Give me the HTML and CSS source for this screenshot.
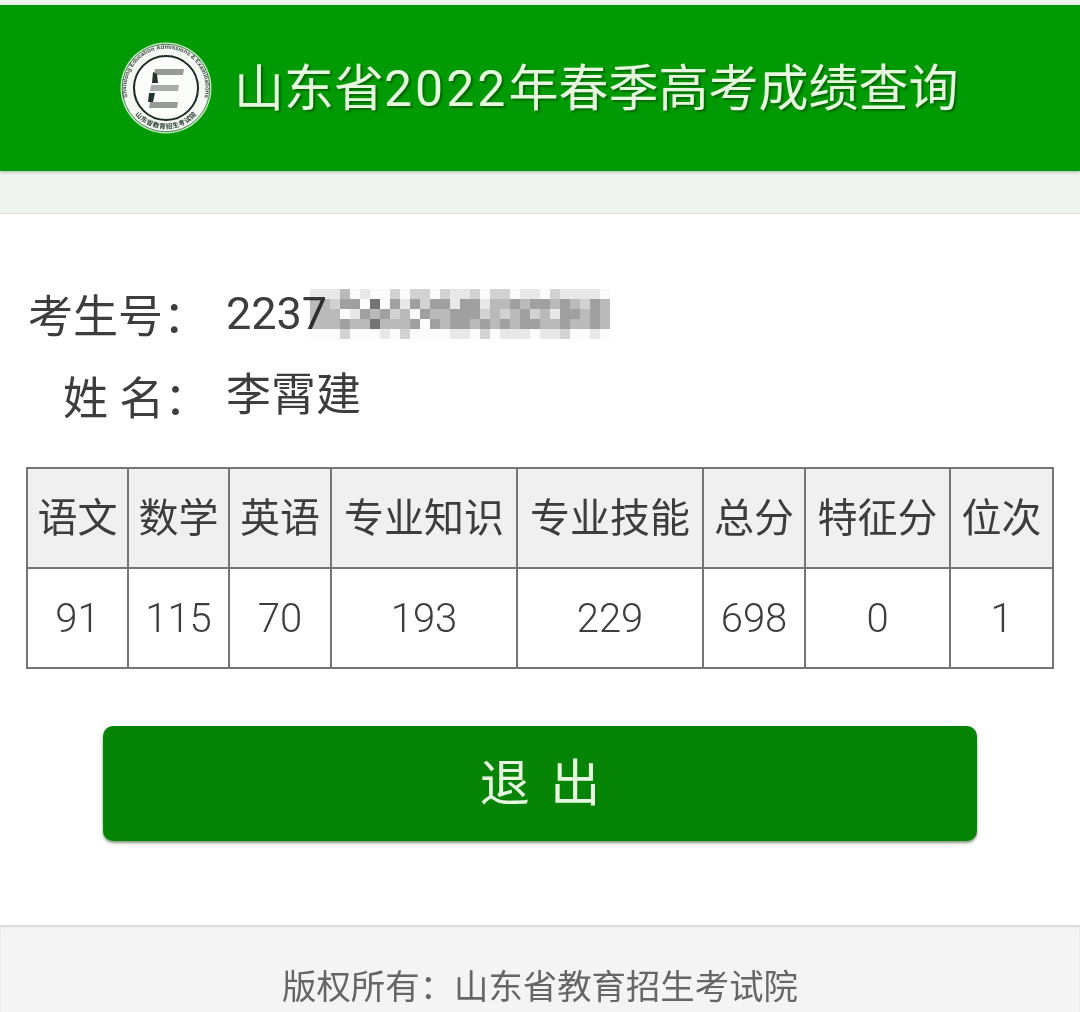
FILE: index.html
```html
<!DOCTYPE html>
<html lang="zh-CN">
<head>
    <meta charset="UTF-8">
    <meta name="viewport" content="width=device-width, initial-scale=1.0">
    <title>山东省2022年春季高考成绩查询</title>
    <link rel="stylesheet" href="styles.css">
</head>
<body>
    <header class="top-bar">
        <svg class="logo" viewBox="0 0 92 92" aria-hidden="true">
            <defs>
                <path id="ringTop" d="M11.8 66 A39.5 39.5 0 1 1 80.2 66"/>
                <path id="ringBottom" d="M9 62 A40 40 0 0 0 83 62"/>
            </defs>
            <circle cx="46" cy="46" r="45.5" fill="#c4eebd"/>
            <circle cx="46" cy="46" r="43.8" fill="#f4f8f4" stroke="#4d7d55" stroke-width="1"/>
            <text class="logo-ring"><textPath href="#ringTop" startOffset="50%" text-anchor="middle">Shandong Education Admissions &amp; Examinations</textPath></text>
            <text class="logo-ring-cn"><textPath href="#ringBottom" startOffset="50%" text-anchor="middle">山东省教育招生考试院</textPath></text>
            <circle cx="46" cy="46" r="32" fill="#fbfdfb" stroke="#1c2a20" stroke-width="2"/>
            <path class="logo-bar" d="M35 27 H64 L63 33 H34 Z M30 60 H58 L57 66 H29 Z"/>
            <path class="logo-bar-mid" d="M31 43 H59 L58 49 H30 Z"/>
            <path class="logo-dark" d="M33 30 L37 32 L38 41 L32 41 Z M29 51 L35 51 L33 60 L28 60 Z"/>
        </svg>
        <h1 class="site-title">山东省<span class="title-year">2022</span>年春季高考成绩查询</h1>
    </header>
    <div class="sub-bar"></div>

    <main class="content">
        <div class="info-row">
            <span class="info-label">考生号：</span>
            <span class="info-value">2237</span>
            <div class="mosaic" aria-hidden="true">
                <i class="a"></i><i class="a"></i><i class="a"></i><i class="c"></i><i></i><i class="a"></i><i></i><i></i><i class="b"></i><i></i><i class="b"></i><i class="b"></i><i></i><i class="b"></i><i class="a"></i><i class="a"></i><i class="b"></i><i></i><i class="b"></i><i class="b"></i><i></i><i class="a"></i><i class="a"></i><i></i><i class="b"></i><i class="a"></i><i class="a"></i><i class="a"></i><i class="a"></i><i></i>
                <i class="c"></i><i class="c"></i><i class="b"></i><i class="d"></i><i class="d"></i><i></i><i class="e"></i><i></i><i class="d"></i><i class="a"></i><i class="d"></i><i class="b"></i><i class="d"></i><i class="d"></i><i class="a"></i><i class="d"></i><i class="d"></i><i class="a"></i><i class="c"></i><i class="c"></i><i class="d"></i><i class="c"></i><i class="d"></i><i class="d"></i><i class="c"></i><i class="d"></i><i class="c"></i><i class="b"></i><i class="d"></i><i class="c"></i>
                <i class="c"></i><i class="c"></i><i class="c"></i><i></i><i class="a"></i><i class="d"></i><i class="c"></i><i class="d"></i><i class="b"></i><i class="c"></i><i></i><i class="d"></i><i class="c"></i><i class="c"></i><i class="d"></i><i class="d"></i><i class="d"></i><i class="b"></i><i class="c"></i><i class="b"></i><i class="c"></i><i class="d"></i><i class="b"></i><i class="c"></i><i class="a"></i><i class="d"></i><i class="d"></i><i class="c"></i><i class="d"></i><i class="c"></i>
                <i class="c"></i><i class="c"></i><i class="c"></i><i class="d"></i><i class="c"></i><i class="c"></i><i class="e"></i><i class="c"></i><i class="c"></i><i class="c"></i><i class="d"></i><i></i><i class="d"></i><i class="c"></i><i class="d"></i><i class="d"></i><i class="c"></i><i class="d"></i><i class="c"></i><i class="d"></i><i class="c"></i><i class="d"></i><i class="d"></i><i class="c"></i><i class="c"></i><i class="d"></i><i class="c"></i><i class="c"></i><i class="d"></i><i class="c"></i>
                <i></i><i></i><i></i><i class="b"></i><i></i><i></i><i></i><i class="a"></i><i></i><i class="b"></i><i></i><i></i><i></i><i></i><i class="a"></i><i class="a"></i><i></i><i class="b"></i><i></i><i class="a"></i><i class="a"></i><i class="a"></i><i></i><i class="a"></i><i class="a"></i><i class="b"></i><i></i><i></i><i class="a"></i><i></i>
            </div>
        </div>
        <div class="info-row">
            <span class="info-label name-label">姓 名：</span>
            <span class="info-value">李霄建</span>
        </div>

        <table class="score-table">
            <colgroup>
                <col class="col-s"><col class="col-s"><col class="col-w"><col class="col-l"><col class="col-l"><col class="col-w"><col class="col-m"><col>
            </colgroup>
            <tr>
                <th>语文</th><th>数学</th><th>英语</th><th>专业知识</th><th>专业技能</th><th>总分</th><th>特征分</th><th>位次</th>
            </tr>
            <tr>
                <td>91</td><td>115</td><td>70</td><td>193</td><td>229</td><td>698</td><td>0</td><td>1</td>
            </tr>
        </table>

        <button class="logout-button">退 出</button>
    </main>

    <footer class="page-footer">版权所有：山东省教育招生考试院</footer>
</body>
</html>
```

FILE: styles.css
```css
* {
    box-sizing: border-box;
}

html, body {
    height: 1012px;
    overflow: hidden;
}

body {
    margin: 0;
    padding-top: 5px;
    background-color: #f1f5f2;
    color: #3d3d3d;
    font-family: Roboto, "Noto Sans CJK SC", "Noto Sans", sans-serif;
    font-weight: 400;
}

.top-bar {
    display: flex;
    align-items: center;
    height: 166px;
    padding: 0 0 0 120px;
    background-color: #009a04;
    box-shadow: 0 1px 3px rgba(0, 60, 0, 0.35);
}

.logo {
    flex: none;
    width: 92px;
    height: 92px;
    margin-bottom: 1px;
}

.logo-ring {
    font-family: "Liberation Sans", sans-serif;
    font-size: 6px;
    font-weight: 700;
    fill: #39493d;
}

.logo-ring-cn {
    font-size: 6.6px;
    font-weight: 700;
    letter-spacing: 0.4px;
    fill: #2a3a2e;
}

.logo-bar {
    fill: #979b98;
}

.logo-bar-mid {
    fill: #a9adaa;
}

.logo-dark {
    fill: #25352b;
}

.site-title {
    margin: 2px 0 0 22px;
    color: #e6f9df;
    font-size: 50px;
    font-weight: 400;
    line-height: 1;
    white-space: nowrap;
    text-shadow: 2px 2px 2px rgba(0, 70, 0, 0.6);
}

.title-year {
    letter-spacing: 3px;
}

.sub-bar {
    height: 43px;
    border-bottom: 1px solid #dcdedc;
}

.content {
    display: flex;
    flex-direction: column;
    height: 711px;
    padding: 58px 26px 0;
    background-color: #fff;
}

.info-row {
    display: flex;
    align-items: center;
    height: 82px;
    font-size: 45px;
}

.info-label {
    width: 200px;
    padding-left: 2px;
    white-space: pre;
}

.name-label {
    padding-left: 37px;
}

.info-value {
    line-height: 1;
}

.mosaic {
    display: grid;
    grid-template-columns: repeat(30, 10px);
    grid-auto-rows: 10px;
    margin: 2px 0 0 -17px;
    filter: blur(0.6px);
    mix-blend-mode: multiply;
}

.mosaic i {
    background-color: #fbfbfb;
}

.mosaic .a {
    background-color: #e8e8e8;
}

.mosaic .b {
    background-color: #d2d2d2;
}

.mosaic .c {
    background-color: #bababa;
}

.mosaic .d {
    background-color: #a0a0a0;
}

.mosaic .e {
    background-color: #747474;
}

.score-table {
    width: 1028px;
    height: 201px;
    margin-top: 31px;
    border-collapse: collapse;
    table-layout: fixed;
    font-size: 40px;
    text-align: center;
}

.col-s {
    width: 101px;
}

.col-w {
    width: 102px;
}

.col-m {
    width: 145px;
}

.col-l {
    width: 186px;
}

.score-table th, .score-table td {
    height: 100px;
    border: 2px solid #757575;
}

.score-table th {
    padding: 0 0 6px;
    background-color: #f0f0f0;
    font-weight: 400;
}

.score-table td {
    padding: 0;
    font-weight: 300;
}

.logout-button {
    width: 874px;
    height: 115px;
    margin: 57px 0 0 77px;
    padding: 0 0 9px;
    border: 0;
    border-radius: 10px;
    background-color: #058405;
    box-shadow: 0 2px 3px rgba(0, 50, 0, 0.5);
    color: #e8f9e2;
    font-family: inherit;
    font-size: 50px;
    font-weight: 400;
    word-spacing: 8px;
}

.page-footer {
    height: 87px;
    padding-top: 37px;
    background-color: #f4f4f4;
    box-shadow: inset 0 2px 2px rgba(0, 0, 0, 0.1);
    color: #666;
    font-size: 34.4px;
    line-height: 50px;
    text-align: center;
    white-space: nowrap;
}
```
